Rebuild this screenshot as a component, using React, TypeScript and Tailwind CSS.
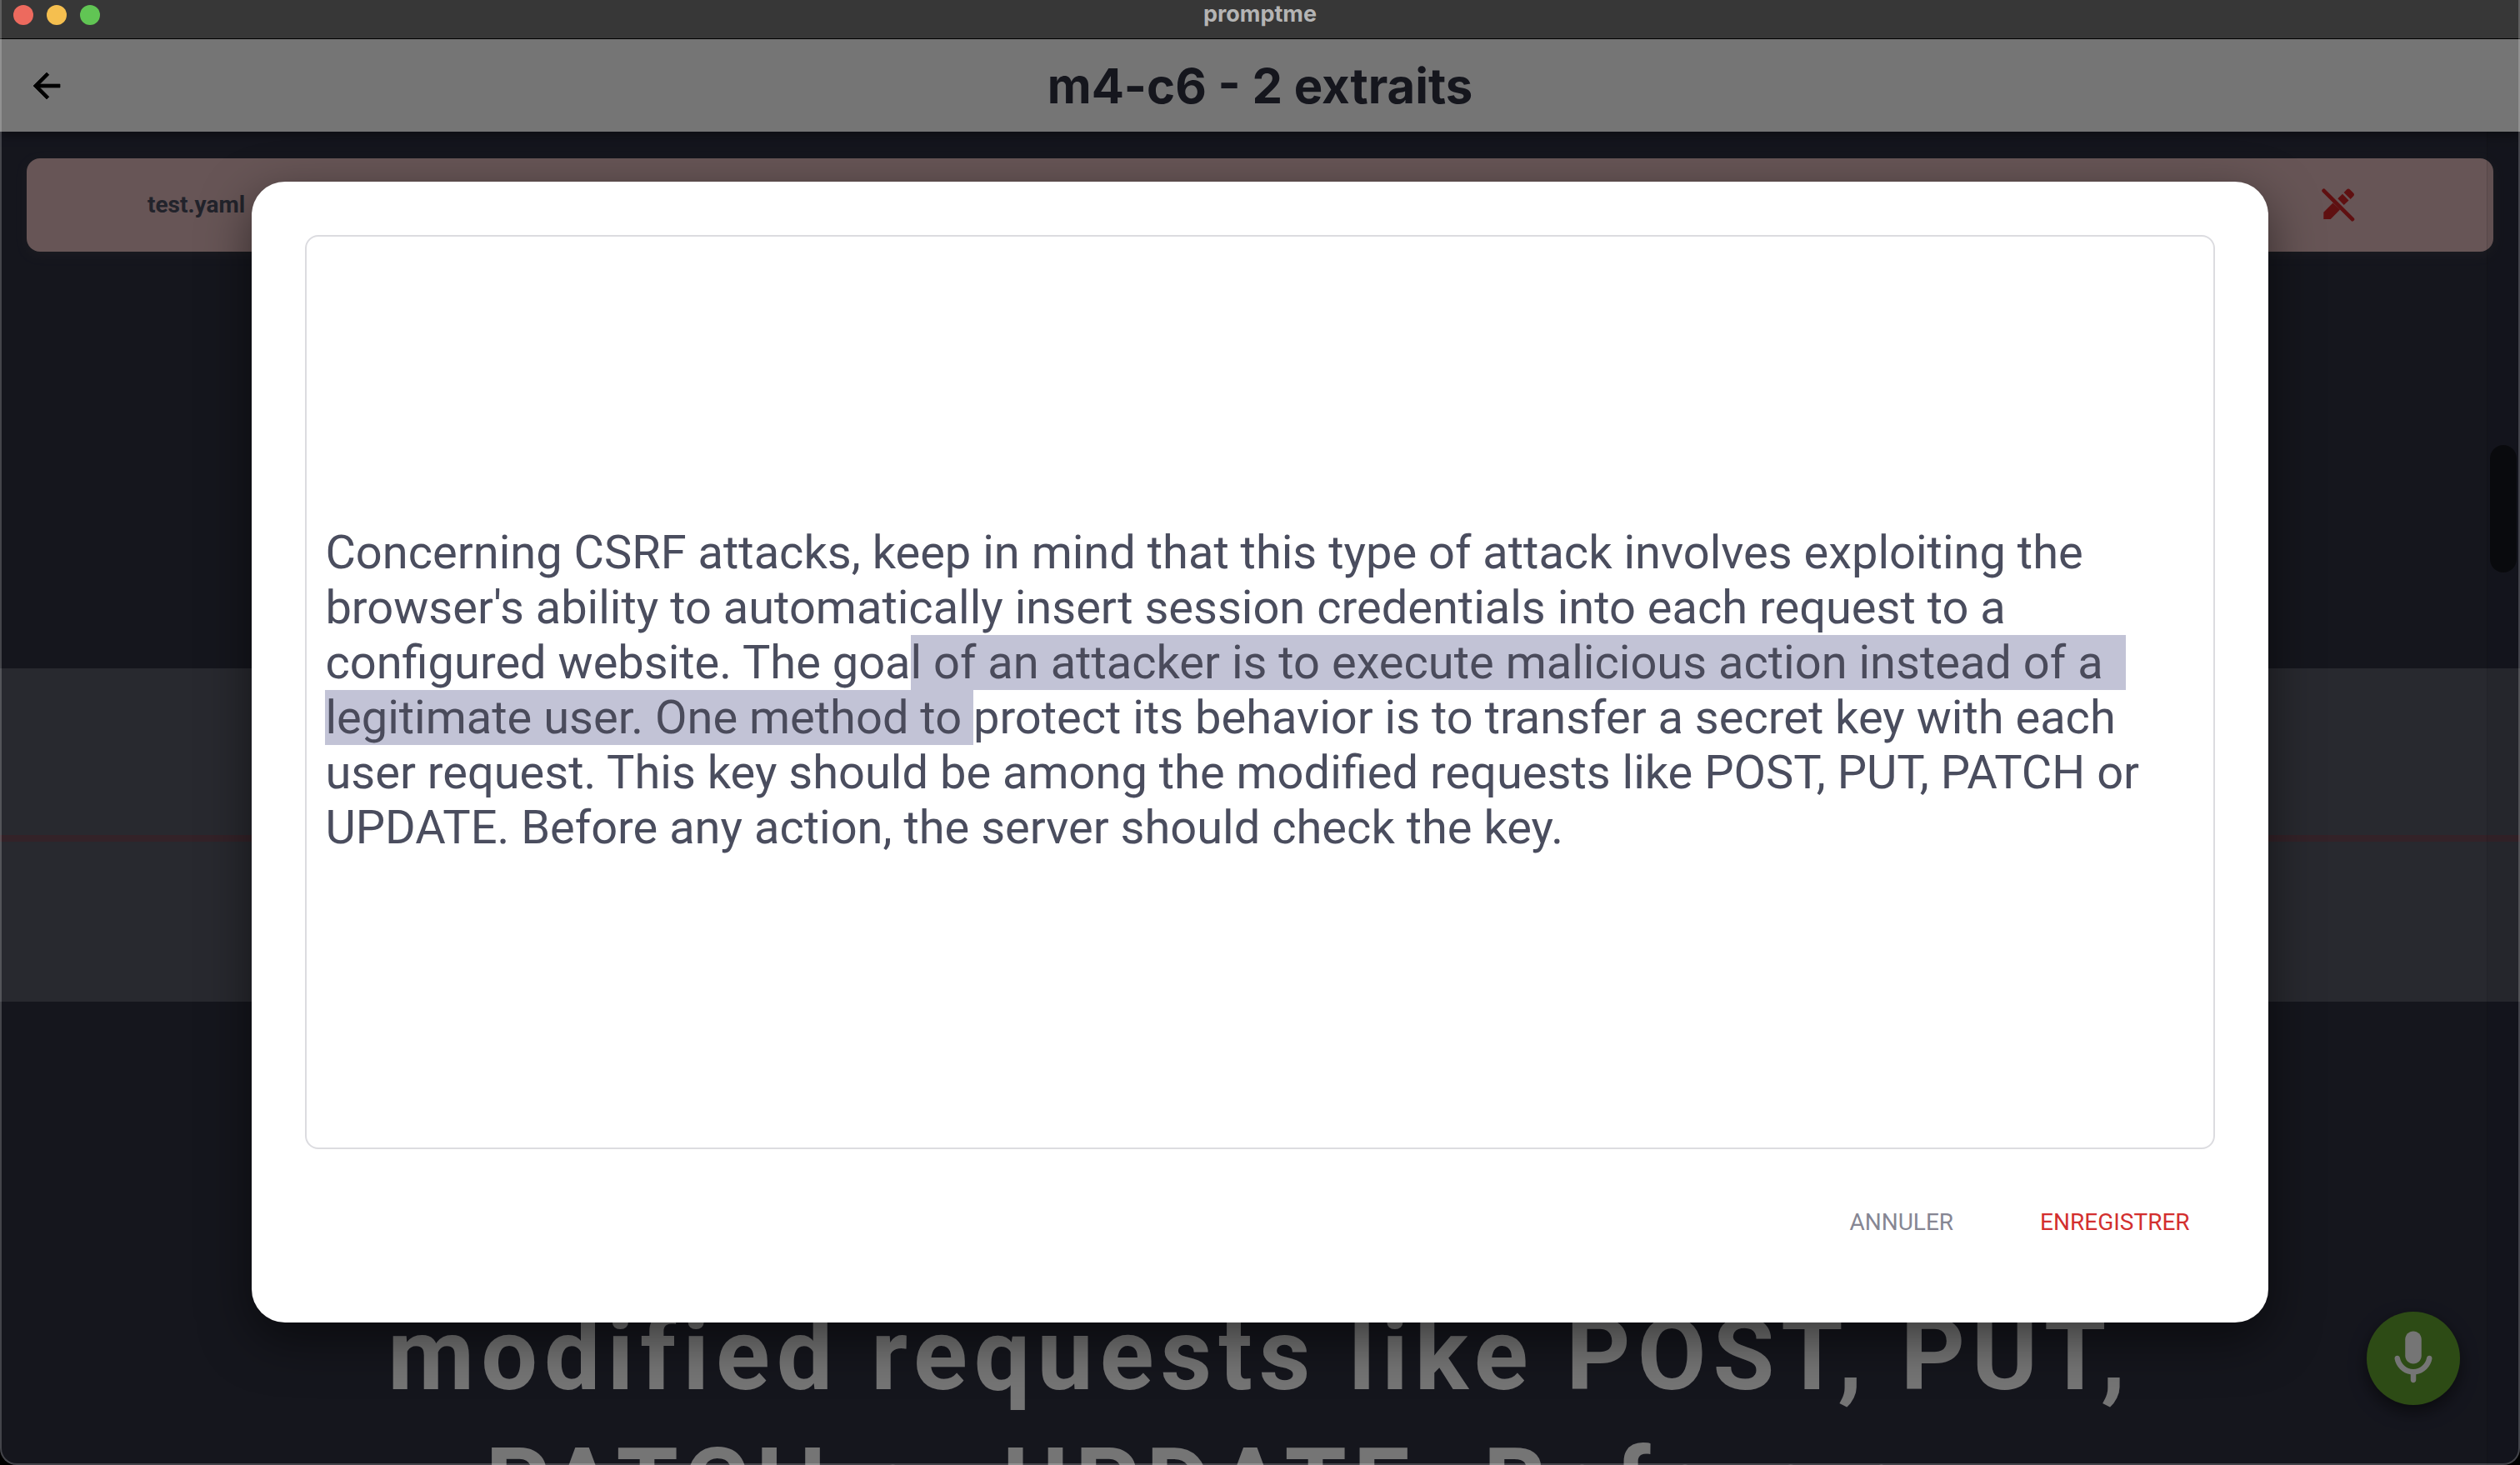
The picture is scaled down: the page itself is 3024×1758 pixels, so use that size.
import { useEffect, useRef } from "react";

const TEXT =
  "Concerning CSRF attacks, keep in mind that this type of attack involves exploiting the browser's ability to automatically insert session credentials into each request to a configured website. The goal of an attacker is to execute malicious action instead of a legitimate user. One method to protect its behavior is to transfer a secret key with each user request. This key should be among the modified requests like POST, PUT, PATCH or UPDATE. Before any action, the server should check the key.";

const SELECTION_START = TEXT.indexOf("l of an attacker");
const SELECTION_END = TEXT.indexOf("protect its");

function TitleBar() {
  return (
    <div className="relative z-20 flex h-[47px] shrink-0 items-start justify-center border-b border-black bg-[#373737]">
      <div className="absolute left-4 top-1.5 flex gap-4">
        <span className="size-6 rounded-full bg-[#ed6a5e]" />
        <span className="size-6 rounded-full bg-[#f5bf4f]" />
        <span className="size-6 rounded-full bg-[#61c554]" />
      </div>
      <p className="font-[Inter,sans-serif] text-[27px] font-bold leading-[34px] text-[#b4b4b4]">promptme</p>
    </div>
  );
}

function Header() {
  return (
    <header className="relative z-10 grid h-[111px] shrink-0 grid-cols-[112px_1fr_112px] items-center bg-white shadow-[0_4px_12px_rgba(0,0,0,0.4)]">
      <button type="button" aria-label="Retour" className="flex size-28 items-center justify-center text-black">
        <svg viewBox="0 0 24 24" className="size-12" fill="currentColor" stroke="currentColor" strokeWidth="0.35">
          <path d="M20 11H7.830l5.590-5.590L12 4l-8 8 8 8 1.410-1.410L7.830 13H20v-2z" />
        </svg>
      </button>
      <h1 className="text-center font-[Inter,sans-serif] text-[58px] font-bold leading-[64px] text-[#2e3041]">
        m4-c6 - 2 extraits
      </h1>
    </header>
  );
}

function EditOffIcon() {
  return (
    <svg viewBox="0 0 40 40" className="size-10" fill="currentColor">
      <path d="M13.500 17.500 L2.300 28.700 V37 H10.700 L22 25.600 Z" />
      <path d="M19.300 12.300 L25 6.800 L32.500 14.500 L26.700 20 Z" />
      <path d="M26.600 4.900 L30 1.500 Q32 -0.500 34 1.500 L38 5.500 Q40 7.500 38 9.500 L34.600 12.900 Z" />
      <path d="M2.600 2.800 L36.900 37.200" stroke="currentColor" strokeWidth="4.700" strokeLinecap="round" />
    </svg>
  );
}

function Prompter() {
  return (
    <main className="relative flex-1 overflow-hidden bg-[#2e3041]">
      <section className="mx-8 mt-8 flex h-28 items-center justify-between rounded-2xl bg-[#e0b9bb] pl-[145px] pr-[166px] shadow-[0_4px_12px_rgba(80,80,80,0.4)]">
        <p className="text-[28px] font-bold leading-9 text-[#4a4d5e]">test.yaml</p>
        <button type="button" aria-label="Modifier" className="text-[#cf2327]">
          <EditOffIcon />
        </button>
      </section>
      <div className="absolute inset-x-0 top-[644px] h-[400px] bg-white/20 pt-[200px]">
        <div className="h-2 bg-[#d3141e]/20" />
      </div>
      <p className="absolute inset-x-0 top-[1390px] text-center text-[120px] font-bold leading-[156px] tracking-[8px] text-white">
        modified requests like POST, PUT,
        <br />
        PATCH or UPDATE. Before any
      </p>
      <div className="absolute inset-y-0 right-0 w-10 border-l border-black/10 bg-black/5">
        <div className="ml-[3px] mt-[376px] h-[153px] w-8 rounded-full bg-black/50" />
      </div>
      <button
        type="button"
        aria-label="Micro"
        className="absolute bottom-[72px] right-[72px] flex size-28 items-center justify-center rounded-full bg-[#63a32e] text-white shadow-[0_8px_20px_rgba(0,0,0,0.5)]"
      >
        <svg viewBox="0 0 24 24" className="size-[78px]" fill="currentColor">
          <path d="M12 14c1.660 0 3-1.340 3-3V5c0-1.660-1.340-3-3-3S9 3.340 9 5v6c0 1.660 1.340 3 3 3z" />
          <path d="M17.910 11c-.49 0-.9.360-.98.850C16.520 14.200 14.470 16 12 16s-4.520-1.800-4.930-4.150c-.08-.49-.49-.85-.98-.85-.61 0-1.090.540-1 1.140.490 3 2.890 5.350 5.910 5.780V20c0 .550.450 1 1 1s1-.45 1-1v-2.080c3.020-.43 5.420-2.780 5.910-5.780.1-.6-.39-1.140-1-1.140z" />
        </svg>
      </button>
    </main>
  );
}

function EditDialog() {
  const field = useRef<HTMLTextAreaElement>(null);

  useEffect(() => {
    field.current?.focus();
    field.current?.setSelectionRange(SELECTION_START, SELECTION_END);
  }, []);

  return (
    <div className="absolute inset-x-0 bottom-0 top-[47px] z-30 flex items-center justify-center bg-black/54">
      <div
        role="dialog"
        aria-modal="true"
        aria-label="Modifier le texte"
        className="flex h-4/5 w-4/5 flex-col rounded-[40px] bg-white px-16 pt-16 pb-20 shadow-[0_20px_60px_rgba(0,0,0,0.5)]"
      >
        <div className="flex flex-1 items-center rounded-2xl border-2 border-[#dcdce0] px-[22px] pb-1">
          <textarea
            ref={field}
            aria-label="Texte"
            defaultValue={TEXT}
            spellCheck={false}
            rows={6}
            className="w-full resize-none overflow-hidden text-[56px] leading-[66px] text-[#4a4d5e] outline-none selection:bg-[#c2c3d6] selection:text-[#4a4b5b]"
          />
        </div>
        <div className="mt-12 flex justify-end gap-11 text-[28px] leading-10">
          <button type="button" className="px-[30px] py-5 text-[#868693]">
            ANNULER
          </button>
          <button type="button" className="px-[30px] py-5 text-[#d32f2f]">
            ENREGISTRER
          </button>
        </div>
      </div>
    </div>
  );
}

export default function App() {
  return (
    <div className="relative flex h-screen flex-col overflow-hidden bg-[#2e3041] font-[Roboto,sans-serif]">
      <TitleBar />
      <Header />
      <Prompter />
      <EditDialog />
      <div className="pointer-events-none absolute inset-0 z-40 rounded-b-[20px] border-2 border-t-0 border-white/20 shadow-[0_0_0_20px_#000]" />
    </div>
  );
}
